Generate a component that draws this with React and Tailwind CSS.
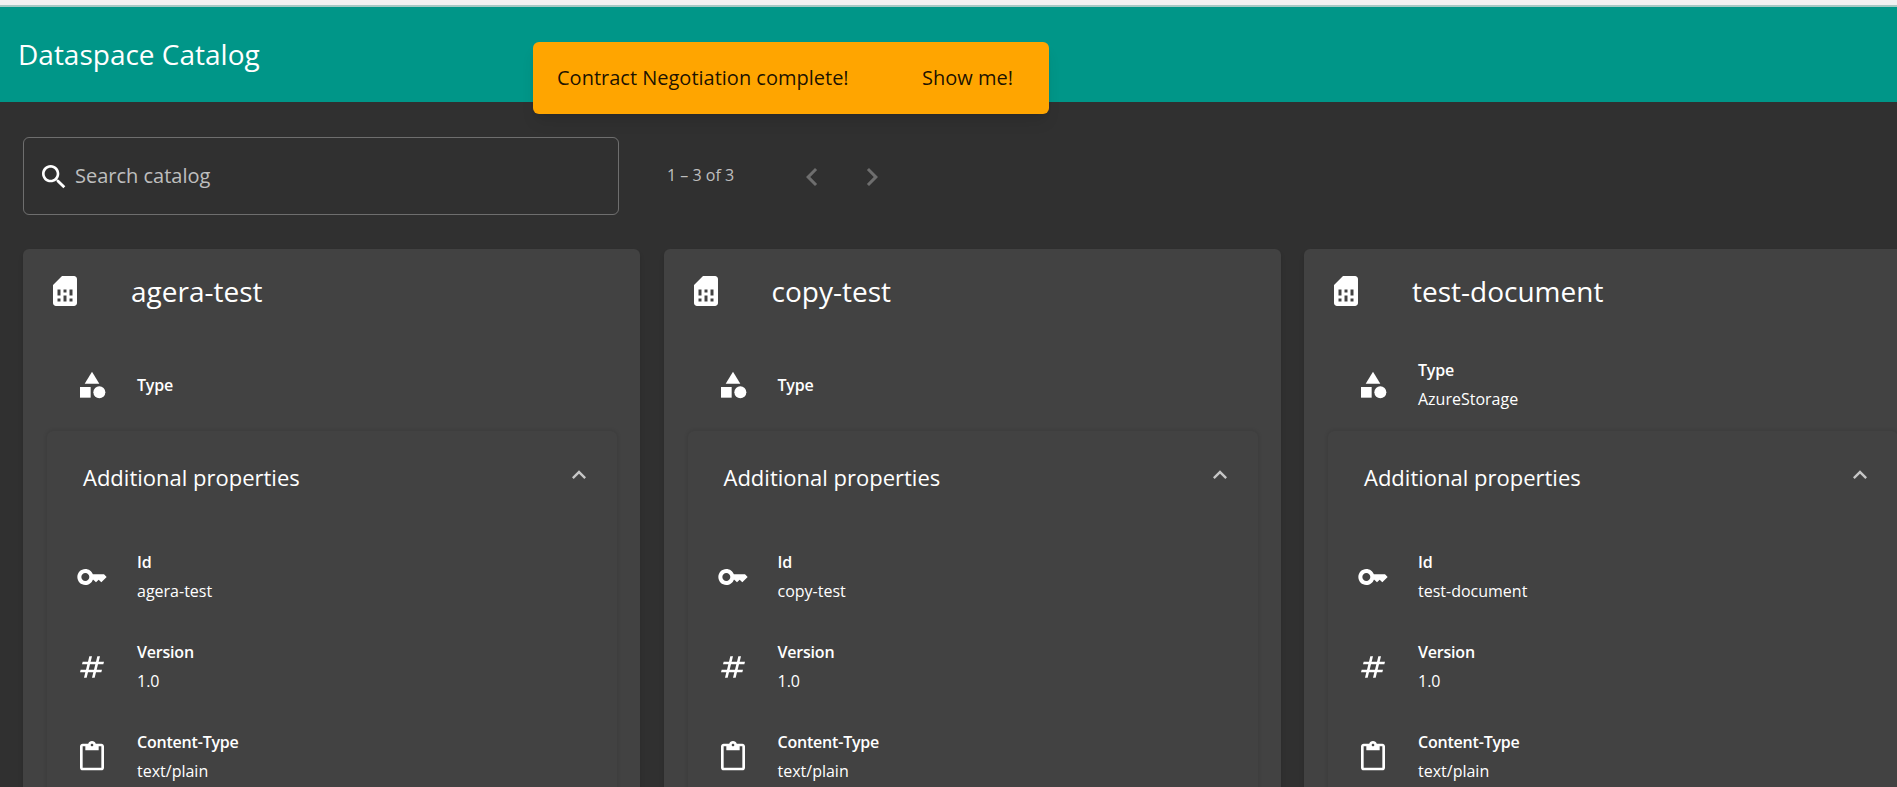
const font = { fontFamily: '"Open Sans", sans-serif' };

const SimCard = () => (
  <svg viewBox="0 0 24 24" className="w-9 h-9 fill-white shrink-0">
    <path d="M19.99 4c0-1.1-.89-2-1.99-2h-8L4 8v12c0 1.1.9 2 2 2h12c1.1 0 2-.9 2-2l-.01-16zM9 19H7v-2h2v2zm8 0h-2v-2h2v2zm-8-4H7v-4h2v4zm4 4h-2v-4h2v4zm0-6h-2v-2h2v2zm4 2h-2v-4h2v4z" />
  </svg>
);

const Category = () => (
  <svg viewBox="0 0 24 24" className="w-8 h-8 fill-white shrink-0">
    <path d="M12 2l-5.5 9h11z" />
    <circle cx="17.5" cy="17.5" r="4.5" />
    <path d="M3 13.5h8v8H3z" />
  </svg>
);

const KeyIcon = () => (
  <svg viewBox="0 0 24 24" className="w-8 h-8 fill-white shrink-0">
    <path d="M21 10h-8.35C11.83 7.67 9.61 6 7 6c-3.31 0-6 2.69-6 6s2.69 6 6 6c2.61 0 4.83-1.67 5.65-4H13l2 2 2-2 2 2 4-4.04L21 10zM7 15c-1.65 0-3-1.35-3-3s1.35-3 3-3 3 1.35 3 3-1.35 3-3 3z" />
  </svg>
);

const Numbers = () => (
  <svg viewBox="0 0 24 24" className="w-8 h-8 fill-white shrink-0">
    <path d="M20.5 10l.5-2h-4l1-4h-2l-1 4h-4l1-4h-2L9 8H5l-.5 2h4l-1 4h-4L3 16h4l-1 4h2l1-4h4l-1 4h2l1-4h4l.5-2h-4l1-4h4zm-7 4h-4l1-4h4l-1 4z" />
  </svg>
);

const Paste = () => (
  <svg viewBox="0 0 24 24" className="w-8 h-8 fill-white shrink-0">
    <path d="M19 2h-4.18C14.4.84 13.3 0 12 0c-1.3 0-2.4.84-2.82 2H5c-1.1 0-2 .9-2 2v16c0 1.1.9 2 2 2h14c1.1 0 2-.9 2-2V4c0-1.1-.9-2-2-2zm-7 0c.55 0 1 .45 1 1s-.45 1-1 1-1-.45-1-1 .45-1 1-1zm7 18H5V4h2v3h10V4h2v16z" />
  </svg>
);

const Property = ({ icon, label, value }) => (
  <div className="flex items-center gap-[29px] pl-[29px] h-[64px]">
    {icon}
    <div className="flex flex-col text-white">
      <span className="text-[16px] leading-[29px] font-semibold tracking-[-0.2px]">{label}</span>
      {value && <span className="text-[16px] leading-[29px]">{value}</span>}
    </div>
  </div>
);

const assets = [
  { name: "agera-test" },
  { name: "copy-test" },
  { name: "test-document", type: "AzureStorage" },
];

function AssetCard({ name, type }) {
  return (
    <div className="w-[617px] shrink-0 bg-[#424242] rounded-md pt-6 px-6 shadow-md">
      <div className="flex items-center gap-[48px]">
        <SimCard />
        <span className="text-[28px] leading-9 text-white">{name}</span>
      </div>
      <div className="mt-[44px]">
        <Property icon={<Category />} label="Type" value={type} />
      </div>
      <div className="mt-[14px] w-[570px] bg-[#424242] rounded-md shadow-[0_0_4px_rgba(0,0,0,0.15)] pb-10">
        <div className="flex items-center justify-between h-[92px] pl-[36px] pr-[24px]">
          <span className="text-[22px] text-white">Additional properties</span>
          <svg viewBox="0 0 24 24" className="w-7 h-7 fill-white/70 mb-1">
            <path d="M12 8l-6 6 1.41 1.41L12 10.83l4.59 4.58L18 14z" />
          </svg>
        </div>
        <div className="flex flex-col gap-[26px] pt-[22px]">
          <Property icon={<KeyIcon />} label="Id" value={name} />
          <Property icon={<Numbers />} label="Version" value="1.0" />
          <Property icon={<Paste />} label="Content-Type" value="text/plain" />
        </div>
      </div>
    </div>
  );
}

export default function App() {
  return (
    <div className="h-[787px] overflow-hidden bg-[#303030] relative" style={font}>
      <div className="h-[5px] bg-[#f1f1f1]" />
      <div className="h-[2px] bg-[#a6c9c4]" />
      <header className="h-[95px] bg-[#009688] flex items-center pl-[18px]">
        <h1 className="text-[28px] text-white font-normal pb-[2px]">Dataspace Catalog</h1>
      </header>

      {/* snackbar sits over the toolbar */}
      <div className="absolute left-[533px] top-[42px] w-[516px] h-[72px] bg-[#ffa500] rounded-md shadow-lg flex items-center justify-between pl-6 pr-[36px] text-[20px] text-black/90">
        <span>Contract Negotiation complete!</span>
        <button>Show me!</button>
      </div>

      <main className="px-[23px] pt-[35px]">
        <div className="flex items-center">
          <div className="w-[596px] h-[78px] border border-white/30 rounded-md flex items-center pl-[14px] gap-[5px]">
            <svg viewBox="0 0 24 24" className="w-8 h-8 fill-white mt-[2px]">
              <path d="M15.5 14h-.79l-.28-.27C15.41 12.59 16 11.11 16 9.5 16 5.91 13.09 3 9.5 3S3 5.91 3 9.5 5.91 16 9.5 16c1.61 0 3.09-.59 4.23-1.57l.27.28v.79l5 4.99L20.49 19l-4.99-5zm-6 0C7.01 14 5 11.99 5 9.5S7.01 5 9.5 5 14 7.01 14 9.5 11.99 14 9.5 14z" />
            </svg>
            <span className="text-[20px] text-white/70">Search catalog</span>
          </div>
          <span className="ml-[48px] text-[16px] text-white/70 mt-[-2px]">1 – 3 of 3</span>
          <div className="flex ml-[60px] gap-[24px] mt-[2px]">
            <svg viewBox="0 0 24 24" className="w-9 h-9 fill-white/30">
              <path d="M15.41 7.41 14 6l-6 6 6 6 1.41-1.41L10.83 12z" />
            </svg>
            <svg viewBox="0 0 24 24" className="w-9 h-9 fill-white/30">
              <path d="M10 6 8.59 7.41 13.17 12l-4.58 4.59L10 18l6-6z" />
            </svg>
          </div>
        </div>

        <div className="flex gap-[23.5px] mt-[34px]">
          {assets.map((a) => (
            <AssetCard key={a.name} {...a} />
          ))}
        </div>
      </main>
    </div>
  );
}
